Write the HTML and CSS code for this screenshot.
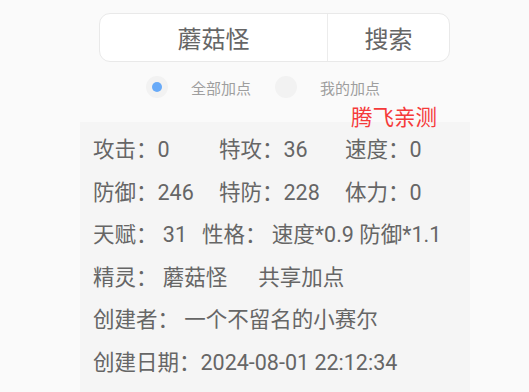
FILE: index.html
```html
<!DOCTYPE html>
<html lang="zh">
<head>
<meta charset="utf-8">
<link rel="stylesheet" href="styles.css">
</head>
<body>
<div class="page">
  <div class="search">
    <div class="search-input">蘑菇怪</div>
    <div class="search-btn">搜索</div>
  </div>
  <div class="radios">
    <div class="radio checked"><span class="dot"></span></div>
    <div class="radio-label">全部加点</div>
    <div class="radio"><span class="dot"></span></div>
    <div class="radio-label">我的加点</div>
  </div>
  <div class="tag">腾飞亲测</div>
  <div class="card">
    <div class="row grid3">
      <span>攻击：0</span><span>特攻：36</span><span>速度：0</span>
    </div>
    <div class="row grid3">
      <span>防御：246</span><span>特防：228</span><span>体力：0</span>
    </div>
    <div class="row">
      <span class="gap18">天赋： 31</span><span>性格： 速度*0.9 防御*1.1</span>
    </div>
    <div class="row">
      <span class="gap31">精灵： 蘑菇怪</span><span>共享加点</span>
    </div>
    <div class="row">创建者： 一个不留名的小赛尔</div>
    <div class="row">创建日期：2024-08-01 22:12:34</div>
  </div>
</div>
</body>
</html>
```
FILE: styles.css
```css
html, body {
  margin: 0;
  padding: 0;
  background: #fafafa;
}
body {
  font-family: Roboto, "Noto Sans CJK SC", "Noto Sans", sans-serif;
  color: #666;
}
.page {
  position: relative;
  width: 529px;
  height: 392px;
  overflow: hidden;
}
.search {
  margin: 13px 0 0 99px;
  width: 351px;
  height: 49px;
  box-sizing: border-box;
  border: 1px solid #e9e9e9;
  border-radius: 11px;
  background: #fff;
  display: flex;
  font-size: 24px;
  color: #666;
}
.search-input {
  width: 227px;
  display: flex;
  align-items: center;
  justify-content: center;
  border-right: 1px solid #ececec;
}
.search-btn {
  flex: 1;
  display: flex;
  align-items: center;
  justify-content: center;
}
.radios {
  margin: 14px 0 0 146px;
  height: 22px;
  display: flex;
  align-items: center;
  gap: 23px;
  font-size: 15px;
  color: #9e9e9e;
}
.radio {
  width: 22px;
  height: 22px;
  border-radius: 50%;
  background: #f2f2f2;
  display: flex;
  align-items: center;
  justify-content: center;
}
.radio .dot {
  width: 10px;
  height: 10px;
  border-radius: 50%;
  background: transparent;
}
.radio.checked .dot {
  background: #68aaf8;
}
.radio-label {
  margin-right: 1px;
}
.tag {
  position: absolute;
  left: 351px;
  top: 104px;
  font-size: 21.5px;
  line-height: 28px;
  color: #f53a3a;
  z-index: 2;
}
.card {
  margin: 24px 0 0 80px;
  width: 390px;
  height: 280px;
  background: #f5f5f5;
  padding: 7px 0 0 13px;
  box-sizing: border-box;
  font-size: 21.5px;
  color: #666;
}
.row {
  height: 42.6px;
  line-height: 42.6px;
  white-space: nowrap;
}
.grid3 {
  display: grid;
  grid-template-columns: 126px 126px 126px;
}
.gap18 {
  margin-right: 15px;
}
.gap31 {
  margin-right: 31px;
}
```
